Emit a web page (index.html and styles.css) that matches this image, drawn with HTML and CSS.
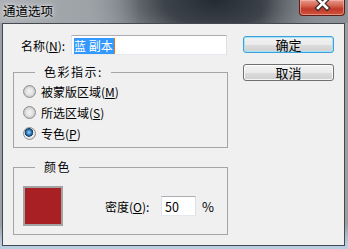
FILE: index.html
```html
<!DOCTYPE html>
<html lang="zh-CN">
<head>
    <meta charset="UTF-8">
    <title>通道选项</title>
    <link rel="stylesheet" href="styles.css">
</head>
<body>

<div class="window">
    <div class="titlebar">
        <span class="title">通道选项</span>
        <div class="close">
            <svg width="46" height="16" viewBox="0 0 46 16">
                <path d="M19 0 L28 9 M28 0 L19 9" stroke="#3a2a28" stroke-width="5" stroke-linecap="square"/>
                <path d="M19 0 L28 9 M28 0 L19 9" stroke="#ffffff" stroke-width="2.6" stroke-linecap="square"/>
            </svg>
        </div>
    </div>
    <div class="client">
        <div class="main">
            <div class="name-row">
                <span class="name-label">名称(<u>N</u>):</span>
                <div class="textbox name-box"><span class="sel">蓝 副本</span></div>
            </div>
            <fieldset class="group indicator">
                <legend>色彩指示:</legend>
                <div class="radio-row"><span class="radio"></span>被蒙版区域(<u>M</u>)</div>
                <div class="radio-row"><span class="radio"></span>所选区域(<u>S</u>)</div>
                <div class="radio-row"><span class="radio checked"></span>专色(<u>P</u>)</div>
            </fieldset>
            <fieldset class="group colour">
                <legend>颜色</legend>
                <div class="colour-row">
                    <div class="swatch"></div>
                    <span class="density-label">密度(<u>O</u>):</span>
                    <div class="textbox density-box">50</div>
                    <span class="pct">%</span>
                </div>
            </fieldset>
        </div>
        <div class="buttons">
            <button class="btn default">确定</button>
            <button class="btn">取消</button>
        </div>
    </div>
</div>

</body>
</html>
```

FILE: styles.css
```css
body {
    margin: 0;
    padding: 0;
    font-family: "Noto Sans CJK SC", "Noto Sans", sans-serif;
    font-size: 12px;
    color: #000;
}
.window {
    width: 348px;
    height: 249px;
    display: flex;
    flex-direction: column;
    background:
        linear-gradient(to bottom, rgba(0, 0, 0, 0) 90%, #b9cde0 98%),
        radial-gradient(ellipse 130px 70px at 62% 0%, #252b33 0%, #3d434a 40%, #7b8187 75%, #9a9fa4 100%);
    background-color: #9a9fa4;
    overflow: hidden;
}
.titlebar {
    height: 23px;
    flex: none;
    display: flex;
    justify-content: space-between;
    background: linear-gradient(to right, #aeb2b6 0%, #a0a5a9 18%, rgba(160, 165, 169, 0) 40%, rgba(130, 136, 141, 0) 75%, #8a9095 100%);
}
.title {
    padding: 4px 0 0 3px;
    font-size: 12.5px;
    line-height: 14px;
    color: #000;
    text-shadow: 0 0 6px #e8eaec, 0 0 3px #e8eaec;
}
.close {
    width: 46px;
    height: 16px;
    margin-right: 3px;
    box-sizing: border-box;
    border: 1px solid #5b1d16;
    border-top: none;
    border-radius: 0 0 4px 4px;
    background: linear-gradient(to bottom, #e59a8c 0%, #d4604c 40%, #c0392a 60%, #d0553d 100%);
    box-shadow: inset 0 0 0 1px rgba(255, 200, 190, 0.5);
}
.close svg {
    display: block;
    margin: -1px 0 0 -1px;
}
.client {
    flex: 1;
    margin: 0 3px 3px 2px;
    display: flex;
    background: #f0f0f0;
    border: 1px solid #444a50;
}
.main {
    width: 215px;
    flex: none;
    padding: 11px 0 0 10px;
}
.name-row {
    display: flex;
    align-items: center;
    height: 20px;
}
.name-label {
    flex: none;
    width: 58px;
    padding-left: 8px;
    box-sizing: border-box;
    white-space: nowrap;
}
.textbox {
    box-sizing: border-box;
    background: #fff;
    border: 1px solid #abadb3;
    border-left-color: #e2e3ea;
    border-right-color: #dbdfe6;
    border-bottom-color: #e3e9ef;
}
.name-box {
    width: 156px;
    height: 20px;
    padding: 1px 0 0 2px;
}
.sel {
    display: inline-block;
    height: 16px;
    line-height: 16px;
    padding-right: 1px;
    background: #3399ff;
    color: #fff;
    border-right: 1px solid #e07a20;
}
.group {
    margin: 10px 0 0 0;
    padding: 0;
    border: 1px solid #a5a5a5;
    border-radius: 0;
}
.group legend {
    margin-left: 12px;
    padding: 0 8px 0 9px;
    line-height: 14px;
    letter-spacing: 1.5px;
}
.indicator {
    padding: 2px 0 3px 9px;
}
.radio-row {
    display: flex;
    align-items: center;
    height: 21px;
    white-space: nowrap;
}
.radio {
    width: 11px;
    height: 11px;
    margin-right: 5px;
    border-radius: 50%;
    border: 1px solid #8e8f8f;
    background: radial-gradient(circle at 50% 50%, #f4f4f4 0%, #e2e2e2 45%, #c9c9c9 70%, #f2f2f2 100%);
}
.radio.checked {
    background: radial-gradient(circle at 45% 40%, #a9d6f5 0%, #2c79b8 28%, #173f66 45%, #f0f0f0 52%, #d9d9d9 80%, #f2f2f2 100%);
}
.colour {
    margin-top: 12px;
    padding: 12px 0 8px 9px;
}
.colour-row {
    display: flex;
    align-items: center;
    white-space: nowrap;
}
.swatch {
    width: 40px;
    height: 40px;
    box-sizing: border-box;
    border: 2px solid #a3a3a3;
    background: #a82024;
}
.density-label {
    margin-left: 42px;
    width: 56px;
}
.density-box {
    width: 35px;
    height: 20px;
    padding: 2px 0 0 3px;
    line-height: 15px;
    font-size: 12.5px;
}
.pct {
    margin-left: 6px;
    font-size: 13px;
}
.buttons {
    display: flex;
    flex-direction: column;
    gap: 11px;
    padding: 12px 0 0 15px;
}
.btn {
    width: 91px;
    height: 17px;
    padding: 0;
    font-family: inherit;
    font-size: 13px;
    line-height: 14px;
    color: #000;
    border: 1px solid #707070;
    border-radius: 3px;
    background: linear-gradient(to bottom, #f2f2f2 0%, #ebebeb 50%, #dddddd 51%, #cfcfcf 100%);
    box-shadow: inset 0 0 0 1px rgba(255, 255, 255, 0.8);
}
.btn.default {
    border-color: #3c9fd8;
    box-shadow: inset 0 0 0 1px #a4e4fa;
}
```
